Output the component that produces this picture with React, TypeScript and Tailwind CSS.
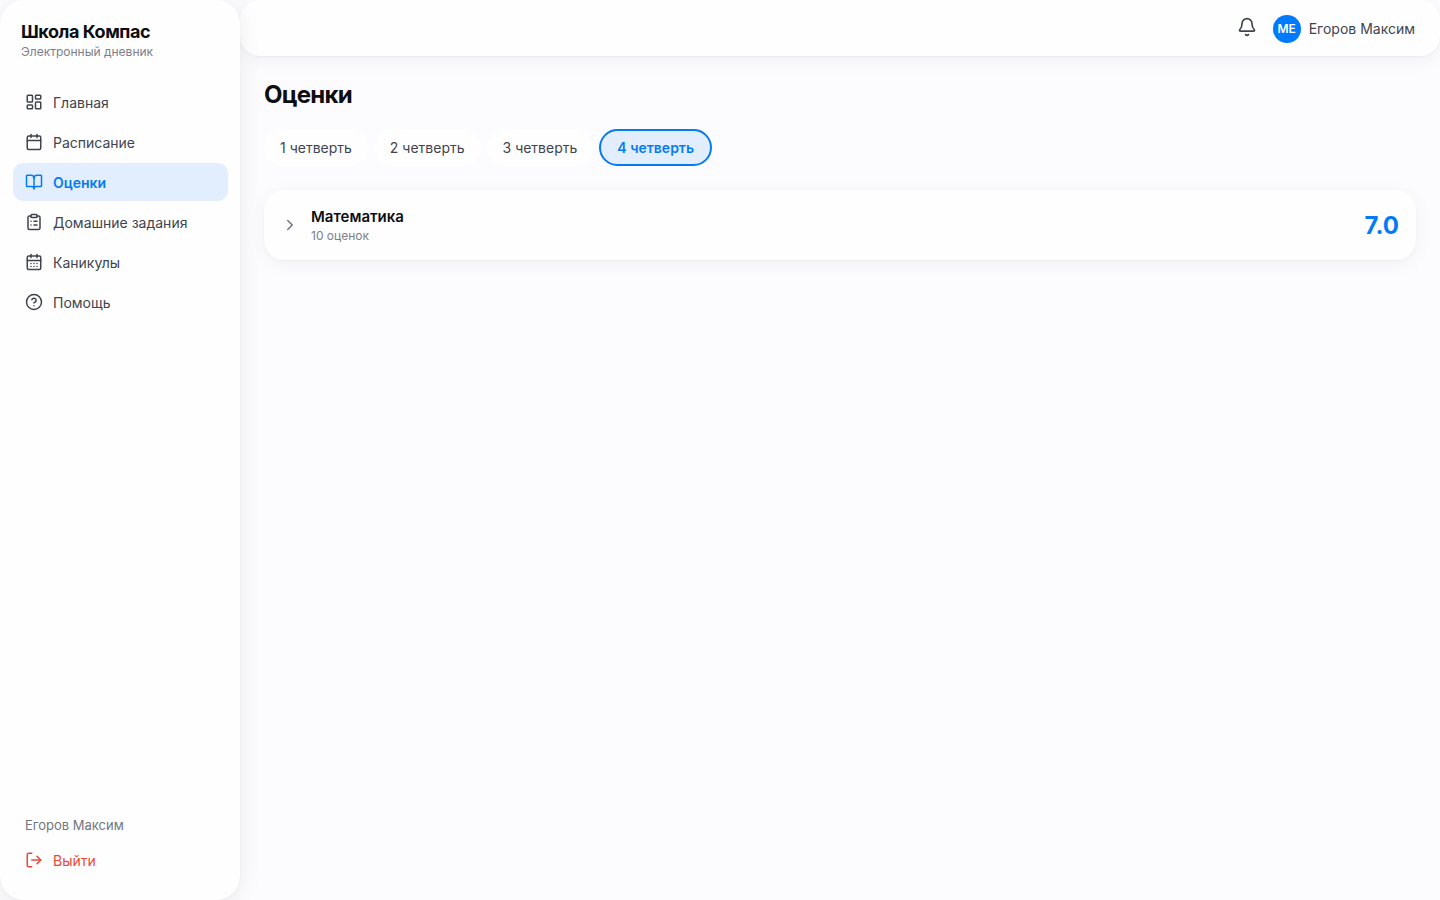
import { useState } from 'react'
import {
    LayoutDashboard,
    Calendar,
    BookOpen,
    ClipboardList,
    CalendarDays,
    CircleHelp,
    LogOut,
    Bell,
    ChevronRight,
    type LucideIcon,
} from 'lucide-react'

interface NavItem {
    label: string
    icon: LucideIcon
}

const NAV_ITEMS: NavItem[] = [
    { label: 'Главная', icon: LayoutDashboard },
    { label: 'Расписание', icon: Calendar },
    { label: 'Оценки', icon: BookOpen },
    { label: 'Домашние задания', icon: ClipboardList },
    { label: 'Каникулы', icon: CalendarDays },
    { label: 'Помощь', icon: CircleHelp },
]

const QUARTERS = [1, 2, 3, 4]

const USER_NAME = 'Егоров Максим'

function Sidebar() {
    const [active, setActive] = useState('Оценки')

    return (
        <aside className="relative z-10 flex h-full w-60 shrink-0 flex-col rounded-3xl bg-[#fefefe] px-[13px] pt-5 pb-5 shadow-[0_4px_24px_rgba(0,0,0,0.07),0_1px_3px_rgba(0,0,0,0.03)]">
            <div className="px-2">
                <div className="text-lg leading-6 font-bold tracking-[-0.45px] text-[#0d0e12]">Школа Компас</div>
                <div className="text-xs leading-4 text-[#7c7f8a]">Электронный дневник</div>
            </div>

            <nav className="mt-[23px] mr-[-1px] flex flex-col gap-0.5">
                {NAV_ITEMS.map(({ label, icon: Icon }) => (
                    <button
                        key={label}
                        type="button"
                        onClick={() => setActive(label)}
                        className={`flex h-[38px] items-center gap-2.5 rounded-[10px] px-3 text-left text-sm ${active === label ? 'bg-[#e2eefe] font-semibold text-[#057bf3]' : 'text-[#41444f]'}`}
                    >
                        <Icon size={18} className="shrink-0" />
                        <span className="pt-0.5">{label}</span>
                    </button>
                ))}
            </nav>

            <div className="mt-auto">
                <div className="px-3 text-[13px] leading-5 text-[#72757f]">{USER_NAME}</div>
                <button type="button" className="mt-1.5 mb-px flex h-[38px] w-full items-center gap-2.5 px-3 text-sm text-[#ee4539]">
                    <LogOut size={18} className="shrink-0" />
                    <span className="pt-0.5">Выйти</span>
                </button>
            </div>
        </aside>
    )
}

function Header() {
    return (
        <header className="flex h-14 shrink-0 items-center justify-end rounded-[20px] bg-[#fefefe] pr-[25px] shadow-[0_4px_20px_rgba(0,0,0,0.05),0_1px_2px_rgba(0,0,0,0.04)]">
            <button type="button" className="mr-4 mb-0.5 text-[#41444f]">
                <Bell size={20} />
            </button>
            <div className="flex items-center gap-2 pt-0.5">
                <div className="flex size-7 items-center justify-center rounded-full bg-[#007aff] text-xs font-semibold text-white">ME</div>
                <span className="text-sm text-[#41444f]">{USER_NAME}</span>
            </div>
        </header>
    )
}

function QuarterTabs() {
    const [quarter, setQuarter] = useState(4)

    return (
        <div className="mt-[18px] flex items-center gap-1.5">
            {QUARTERS.map((q) => (
                <button
                    key={q}
                    type="button"
                    onClick={() => setQuarter(q)}
                    className={`h-[37px] rounded-full px-4 text-sm ${quarter === q ? 'border-2 border-[#057bf3] bg-[#e2eefe] font-semibold text-[#057bf3]' : 'bg-[#fefefe] text-[#41444f]'}`}
                >
                    {q} четверть
                </button>
            ))}
        </div>
    )
}

function SubjectCard({ name, count, average }: { name: string; count: string; average: string }) {
    return (
        <div className="mt-6 flex h-[70px] items-center rounded-[20px] bg-[#fefefe] px-[17px] shadow-[0_4px_20px_rgba(0,0,0,0.05),0_1px_2px_rgba(0,0,0,0.03)]">
            <ChevronRight size={18} className="mr-3 shrink-0 text-[#72757f]" />
            <div className="flex-1 pt-0.5">
                <div className="text-[15px] leading-5 font-semibold text-[#0d0e12]">{name}</div>
                <div className="text-xs leading-[18px] text-[#7c7f8a]">{count}</div>
            </div>
            <span className="pt-0.5 text-2xl font-bold text-[#057bf3]">{average}</span>
        </div>
    )
}

export default function App() {
    return (
        <div className="flex h-screen bg-[#fcfcfe] font-['Inter',sans-serif]">
            <Sidebar />
            <div className="flex min-w-0 flex-1 flex-col">
                <Header />
                <main className="flex-1 px-6 pt-[23px]">
                    <h1 className="text-2xl leading-8 font-bold tracking-[-0.72px] text-[#0d0e12]">Оценки</h1>
                    <QuarterTabs />
                    <SubjectCard name="Математика" count="10 оценок" average="7.0" />
                </main>
            </div>
        </div>
    )
}
